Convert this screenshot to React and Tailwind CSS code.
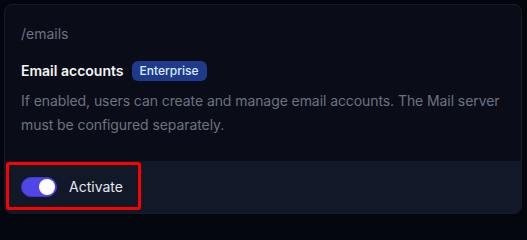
const App = () => {
    return (
        <div className="w-full h-screen min-h-[218px] bg-[#04060e] pt-1 pl-1" style={{ fontFamily: 'Inter, "Noto Sans", sans-serif' }}>
            <div className="w-[518px] h-[210px] flex flex-col rounded-lg border border-[#161b29] bg-[#0a0d18] overflow-hidden">
                <div className="flex-1 px-4 pt-[19px]">
                    <p className="text-sm leading-5 text-[#6b7280]">/emails</p>
                    <div className="mt-[17px] flex items-center gap-2 h-5">
                        <span className="text-sm leading-5 font-semibold text-[#f3f4f6]">Email accounts</span>
                        <span className="rounded-md bg-[#1e3a8a] px-2 py-0.5 text-xs leading-4 font-medium text-[#dbeafe]">
                            Enterprise
                        </span>
                    </div>
                    <p className="mt-2 pr-1 text-sm leading-6 tracking-[-0.08px] text-[#6b7280]">
                        If enabled, users can create and manage email accounts. The Mail server must be configured separately.
                    </p>
                </div>
                <div className="relative h-[52px] flex items-center gap-3 px-4 bg-[#111827]">
                    <button className="relative w-9 h-5 rounded-full bg-[#4f46e5] border border-[#4338ca]">
                        <span className="absolute right-[1px] top-[1px] w-4 h-4 rounded-full bg-white" />
                    </button>
                    <span className="text-sm leading-5 text-[#e5e7eb]">Activate</span>
                    <div className="absolute left-[1px] top-[1px] w-[135px] h-[48px] rounded-[3px] border-[3px] border-[#ff0000] pointer-events-none" />
                </div>
            </div>
        </div>
    )
}

export default App;
